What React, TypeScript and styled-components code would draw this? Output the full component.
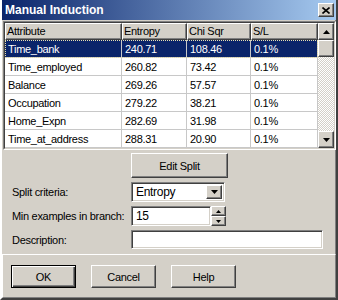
import React from "react"
import styled, { createGlobalStyle, css } from "styled-components"

const FACE = "#d4d0c8"

const GlobalStyle = createGlobalStyle`
  html, body { margin: 0; padding: 0; background: ${FACE}; }
  body {
    font-family: "Liberation Sans", Arial, sans-serif;
    font-size: 11px;
    letter-spacing: -0.3px;
    color: #000;
  }
  * { box-sizing: border-box; }
`

const raised = css`
  background: ${FACE};
  border: 1px solid;
  border-color: #fff #404040 #404040 #fff;
  box-shadow: inset -1px -1px 0 #808080;
`

const Window = styled.div`
  width: 338px;
  height: 300px;
  display: flex;
  flex-direction: column;
  background: ${FACE};
  border: 2px solid;
  border-top: 0;
  border-color: ${FACE} #404040 #404040 #fff;
  box-shadow: inset -1px -1px 0 #808080;
`

const TitleBar = styled.div`
  height: 20px;
  display: flex;
  align-items: center;
  padding-left: 3px;
  background: linear-gradient(to right, #0a246a, #a6caf0);
  color: #fff;
  font-weight: bold;
  font-size: 12px;
  letter-spacing: 0;
`

const CloseBox = styled.div`
  ${raised}
  width: 16px;
  height: 14px;
  margin-left: auto;
  margin-right: 2px;
  display: flex;
  align-items: center;
  justify-content: center;
`

const ListFrame = styled.div`
  margin: 1px 0 0 1px;
  height: 129px;
  border: 1px solid;
  border-color: #808080 #fff #fff #808080;
`

const ListInner = styled.div`
  height: 100%;
  display: flex;
  background: #fff;
  border: 1px solid;
  border-color: #404040 ${FACE} ${FACE} #404040;
`

const Table = styled.div`
  flex: 1;
  display: flex;
  flex-direction: column;
`

const HeaderRow = styled.div`
  display: flex;
  height: 17px;
`

const HeaderCell = styled.div<{ $w: number }>`
  ${raised}
  width: ${p => p.$w}px;
  padding-left: 1px;
  line-height: 15px;
  white-space: nowrap;
`

const Row = styled.div<{ $selected?: boolean }>`
  display: flex;
  height: 18px;
  background: ${p => (p.$selected ? "#0a246a" : "#fff")};
  color: ${p => (p.$selected ? "#fff" : "#000")};
  outline: ${p => (p.$selected ? "1px dotted #e8e0b0" : "none")};
  outline-offset: -1px;
`

const Cell = styled.div<{ $w: number }>`
  width: ${p => p.$w}px;
  padding-left: 3px;
  line-height: 18px;
  border-right: 1px solid #c8c8c8;
  border-bottom: 1px solid #c8c8c8;
  white-space: nowrap;
`

const Scrollbar = styled.div`
  width: 16px;
  display: flex;
  flex-direction: column;
`

const ScrollButton = styled.div<{ $h: number }>`
  ${raised}
  height: ${p => p.$h}px;
  display: flex;
  align-items: center;
  justify-content: center;
`

const Track = styled.div`
  flex: 1;
  background: repeating-conic-gradient(#fff 0 25%, ${FACE} 0 50%) 0 0 / 2px 2px;
`

const Form = styled.div`
  display: grid;
  grid-template-columns: 119px auto;
  grid-template-rows: 25px 20px 20px 19px;
  row-gap: 4px;
  align-items: center;
  padding: 3px 0 0 10px;
`

const Label = styled.div`
  grid-column: 1;
  white-space: nowrap;
`

const PushButton = styled.button<{ $w: number; $h: number; $default?: boolean }>`
  ${raised}
  width: ${p => p.$w}px;
  height: ${p => p.$h}px;
  padding: 0;
  font: inherit;
  letter-spacing: inherit;
  color: #000;
  ${p =>
    p.$default &&
    css`
      border-color: #000;
      box-shadow: inset 1px 1px 0 #fff, inset -1px -1px 0 #404040, inset -2px -2px 0 #808080;
    `}
`

const FieldSlot = styled.div`
  grid-column: 2;
  display: flex;
  align-self: stretch;
`

const Field = styled.div<{ $w: number }>`
  width: ${p => p.$w}px;
  height: 100%;
  display: flex;
  align-items: center;
  background: #fff;
  border: 1px solid;
  border-color: #808080 #fff #fff #808080;
  box-shadow: inset 1px 1px 0 #404040, inset -1px -1px 0 ${FACE};
  padding: 2px 2px 2px 4px;
  font-size: 12px;
`

const DropButton = styled.div`
  ${raised}
  width: 16px;
  height: 100%;
  margin-left: auto;
  display: flex;
  align-items: center;
  justify-content: center;
`

const SpinColumn = styled.div`
  width: 15px;
  display: flex;
  flex-direction: column;
`

const SpinButton = styled.div`
  ${raised}
  flex: 1;
  display: flex;
  align-items: center;
  justify-content: center;
`

const Panel = styled.div`
  flex: 1;
  margin-top: 5px;
  display: flex;
  gap: 15px;
  padding: 10px 0 0 8px;
  border: 1px solid;
  border-color: #fff #808080 #808080 #fff;
`

const Arrow = ({ down, w = 7 }: { down?: boolean; w?: number }) => {
  const h = Math.ceil(w / 2)
  return (
    <svg width={w} height={h} viewBox={`0 0 ${w} ${h}`}>
      <polygon
        points={down ? `0,0 ${w},0 ${w / 2},${h}` : `0,${h} ${w},${h} ${w / 2},0`}
        fill="#000"
      />
    </svg>
  )
}

const columns = [117, 65, 64, 67]
const headers = ["Attribute", "Entropy", "Chi Sqr", "S/L"]
const rows = [
  ["Time_bank", "240.71", "108.46", "0.1%"],
  ["Time_employed", "260.82", "73.42", "0.1%"],
  ["Balance", "269.26", "57.57", "0.1%"],
  ["Occupation", "279.22", "38.21", "0.1%"],
  ["Home_Expn", "282.69", "31.98", "0.1%"],
  ["Time_at_address", "288.31", "20.90", "0.1%"],
]

export default function App() {
  return (
    <>
      <GlobalStyle />
      <Window>
        <TitleBar>
          Manual Induction
          <CloseBox>
            <svg width="8" height="7" viewBox="0 0 8 7">
              <path d="M0.5 0.5 L7.5 6.5 M7.5 0.5 L0.5 6.5" stroke="#000" strokeWidth="1.6" />
            </svg>
          </CloseBox>
        </TitleBar>

        <ListFrame>
          <ListInner>
            <Table>
              <HeaderRow>
                {headers.map((h, i) => (
                  <HeaderCell key={h} $w={columns[i]}>{h}</HeaderCell>
                ))}
              </HeaderRow>
              {rows.map((r, ri) => (
                <Row key={r[0]} $selected={ri === 0}>
                  {r.map((v, i) => (
                    <Cell key={i} $w={columns[i]}>{v}</Cell>
                  ))}
                </Row>
              ))}
            </Table>
            <Scrollbar>
              <ScrollButton $h={17}><Arrow /></ScrollButton>
              <ScrollButton $h={17} />
              <Track />
              <ScrollButton $h={17}><Arrow down /></ScrollButton>
            </Scrollbar>
          </ListInner>
        </ListFrame>

        <Form>
          <FieldSlot>
            <PushButton $w={97} $h={25}>Edit Split</PushButton>
          </FieldSlot>

          <Label>Split criteria:</Label>
          <FieldSlot>
            <Field $w={94} style={{ paddingRight: 2 }}>
              Entropy
              <DropButton><Arrow down /></DropButton>
            </Field>
          </FieldSlot>

          <Label>Min examples in branch:</Label>
          <FieldSlot>
            <Field $w={80}>15</Field>
            <SpinColumn>
              <SpinButton><Arrow w={5} /></SpinButton>
              <SpinButton><Arrow down w={5} /></SpinButton>
            </SpinColumn>
          </FieldSlot>

          <Label>Description:</Label>
          <FieldSlot>
            <Field $w={192} />
          </FieldSlot>
        </Form>

        <Panel>
          <PushButton $w={65} $h={23} $default>OK</PushButton>
          <PushButton $w={65} $h={23}>Cancel</PushButton>
          <PushButton $w={65} $h={23}>Help</PushButton>
        </Panel>
      </Window>
    </>
  )
}
